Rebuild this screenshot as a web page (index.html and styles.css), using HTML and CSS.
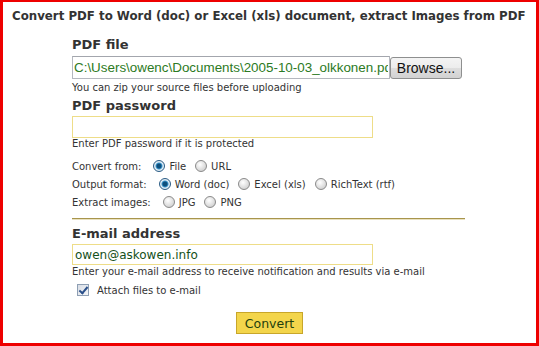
FILE: index.html
```html
<!DOCTYPE html>
<html lang="en">
<head>
    <meta charset="UTF-8" />
    <title>Convert PDF to Word or Excel</title>
    <link rel="stylesheet" href="styles.css">
</head>
<body>
    <div class="frame">
        <h1 class="title">Convert PDF to Word (doc) or Excel (xls) document, extract Images from PDF</h1>

        <form class="form">
            <h2 class="label">PDF file</h2>
            <div class="file-row">
                <input class="file-input" type="text" value="C:\Users\owenc\Documents\2005-10-03_olkkonen.pdf">
                <button type="button" class="browse">Browse...</button>
            </div>
            <p class="hint">You can zip your source files before uploading</p>

            <h2 class="label label-gap">PDF password</h2>
            <input class="field" type="password">
            <p class="hint hint-tight">Enter PDF password if it is protected</p>

            <div class="options">
                <div class="opt-row">
                    <span class="opt-name">Convert from:</span>
                    <label><input type="radio" name="src" checked>File</label>
                    <label><input type="radio" name="src">URL</label>
                </div>
                <div class="opt-row">
                    <span class="opt-name">Output format:</span>
                    <label><input type="radio" name="fmt" checked>Word (doc)</label>
                    <label><input type="radio" name="fmt">Excel (xls)</label>
                    <label><input type="radio" name="fmt">RichText (rtf)</label>
                </div>
                <div class="opt-row">
                    <span class="opt-name">Extract images:</span>
                    <label><input type="radio" name="img">JPG</label>
                    <label><input type="radio" name="img">PNG</label>
                </div>
            </div>

            <hr class="sep">

            <h2 class="label label-mail">E-mail address</h2>
            <input class="field email" type="text" value="owen@askowen.info">
            <p class="hint hint-mail">Enter your e-mail address to receive notification and results via e-mail</p>
            <label class="attach"><input type="checkbox" checked>Attach files to e-mail</label>
        </form>

        <div class="actions">
            <button type="button" class="convert">Convert</button>
        </div>
    </div>
</body>
</html>
```

FILE: styles.css
```css
* {
    margin: 0;
    padding: 0;
    box-sizing: border-box;
}

body {
    background: #fff;
    font-family: 'DejaVu Sans', Verdana, sans-serif;
    color: #333;
}

.frame {
    width: 539px;
    height: 346px;
    border: 3px solid #ee0000;
    border-top-width: 2px;
}

.title {
    font-size: 11.8px;
    font-weight: bold;
    line-height: 29px;
    padding-left: 9px;
    color: #333;
    white-space: nowrap;
}

.form {
    margin-left: 69px;
}

.label {
    font-size: 13px;
    font-weight: bold;
    line-height: 18px;
    margin-top: 5px;
    color: #333;
}

.label-gap {
    margin-top: 3px;
}

.label-mail {
    margin-top: 5px;
}

.file-row {
    display: flex;
    align-items: flex-start;
    margin-top: 2px;
}

.file-input {
    width: 318px;
    height: 23px;
    border: 1px solid #b5b8bf;
    border-top-color: #a3a6ad;
    padding: 0 1px;
    font-family: 'Liberation Sans', Arial, sans-serif;
    font-size: 13.4px;
    color: #2c7a24;
    outline: none;
}

.browse {
    width: 72px;
    height: 22px;
    margin-top: 1px;
    border: 1px solid #8e8f8f;
    border-radius: 3px;
    background: linear-gradient(#f4f4f4, #ececec 50%, #dedede 51%, #d2d2d2);
    font-family: 'Liberation Sans', Arial, sans-serif;
    font-size: 14px;
    color: #111;
}

.hint {
    font-size: 10px;
    line-height: 12px;
    margin-top: 3px;
    color: #333;
}

.hint-tight {
    margin-top: 0;
}

.hint-mail {
    margin-top: 1px;
}

.field {
    display: block;
    width: 301px;
    height: 22px;
    margin-top: 1px;
    border: 1px solid #eedd88;
    outline: none;
    padding: 0 2px;
}

.email {
    height: 21px;
    margin-top: 1px;
    font-family: 'DejaVu Sans', Verdana, sans-serif;
    font-size: 12px;
    color: #15501a;
}

.options {
    margin-top: 7px;
    font-size: 10px;
}

.opt-row {
    display: flex;
    align-items: center;
    height: 18px;
}

.opt-name {
    margin-right: 3px;
}

.opt-row label {
    display: flex;
    align-items: center;
}

input[type="radio"] {
    appearance: none;
    width: 12px;
    height: 12px;
    margin: 0 4px 0 9px;
    border: 1px solid #8a8a8a;
    border-radius: 50%;
    background: radial-gradient(circle at 40% 35%, #ffffff, #d6d6d6 70%, #bdbdbd);
}

input[type="radio"]:checked {
    border-color: #2b5c85;
    background: radial-gradient(circle, #0d4f7c 0 2px, #3c95cc 3px, #e6f1f8 4px, #c8d8e4);
}

.sep {
    width: 393px;
    margin-top: 7px;
    border: 0;
    border-top: 1px solid #a8954c;
    border-bottom: 1px solid #e9e1c0;
}

.attach {
    display: flex;
    align-items: center;
    height: 18px;
    margin-top: 3px;
    padding-left: 5px;
    font-size: 10px;
}

.attach input {
    appearance: none;
    width: 12px;
    height: 12px;
    margin-right: 8px;
    border: 1px solid #8e9fb4;
    background: linear-gradient(135deg, #d8dde5, #f5f6f8);
    position: relative;
}

.attach input:checked::after {
    content: "";
    position: absolute;
    left: 3px;
    top: 0;
    width: 3px;
    height: 7px;
    border: solid #2a4f8a;
    border-width: 0 2px 2px 0;
    transform: rotate(40deg);
}

.actions {
    text-align: center;
    margin-top: 13px;
}

.convert {
    width: 67px;
    height: 22px;
    border: 1px solid #c8a62a;
    background: #f3d54b;
    font-family: 'DejaVu Sans', Verdana, sans-serif;
    font-size: 12.5px;
    color: #22400e;
}
```
